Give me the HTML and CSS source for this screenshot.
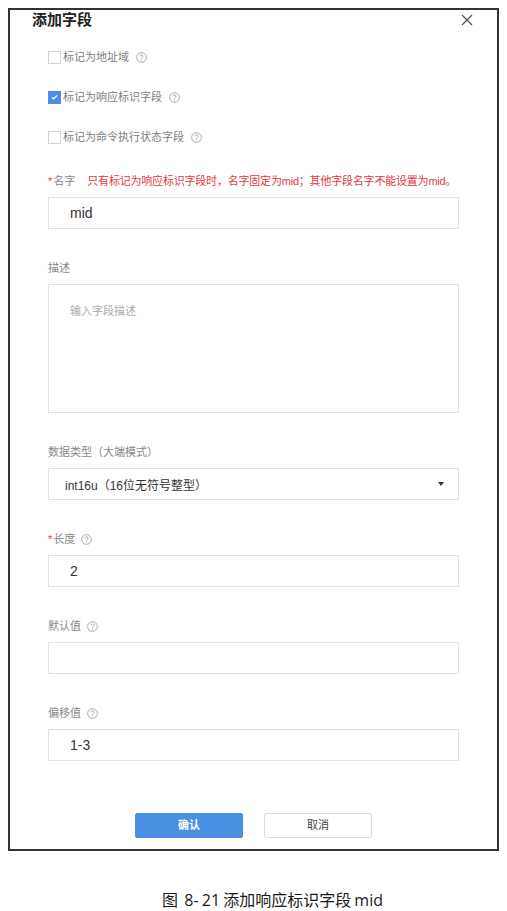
FILE: index.html
```html
<!DOCTYPE html>
<html lang="zh-CN">
<head>
<meta charset="utf-8">
<title>添加字段</title>
<link rel="stylesheet" href="styles.css">
</head>
<body>
<div class="dialog">
  <div class="dlg-head">
    <span class="dlg-title">添加字段</span>
    <svg class="close" width="12" height="12" viewBox="0 0 12 12"><path d="M1 1L11 11M11 1L1 11" stroke="#555" stroke-width="1.3" fill="none"/></svg>
  </div>

  <div class="checks">
    <div class="check-row">
      <span class="box"></span><span class="check-text">标记为地址域</span>
      <svg class="help" width="11" height="11" viewBox="0 0 12 12"><circle cx="6" cy="6" r="5.3" fill="none" stroke="#999" stroke-width="0.9"/><path d="M4.4 4.7a1.6 1.6 0 1 1 2.3 1.4c-.5.3-.7.6-.7 1.1v.3" fill="none" stroke="#999" stroke-width="0.9"/><circle cx="6" cy="8.9" r="0.55" fill="#999"/></svg>
    </div>
    <div class="check-row">
      <span class="box checked"><svg width="12" height="12" viewBox="0 0 12 12"><path d="M3.2 6.2L5.2 8L8.8 4.2" fill="none" stroke="#fff" stroke-width="1.3"/></svg></span><span class="check-text">标记为响应标识字段</span>
      <svg class="help" width="11" height="11" viewBox="0 0 12 12"><circle cx="6" cy="6" r="5.3" fill="none" stroke="#999" stroke-width="0.9"/><path d="M4.4 4.7a1.6 1.6 0 1 1 2.3 1.4c-.5.3-.7.6-.7 1.1v.3" fill="none" stroke="#999" stroke-width="0.9"/><circle cx="6" cy="8.9" r="0.55" fill="#999"/></svg>
    </div>
    <div class="check-row">
      <span class="box"></span><span class="check-text">标记为命令执行状态字段</span>
      <svg class="help" width="11" height="11" viewBox="0 0 12 12"><circle cx="6" cy="6" r="5.3" fill="none" stroke="#999" stroke-width="0.9"/><path d="M4.4 4.7a1.6 1.6 0 1 1 2.3 1.4c-.5.3-.7.6-.7 1.1v.3" fill="none" stroke="#999" stroke-width="0.9"/><circle cx="6" cy="8.9" r="0.55" fill="#999"/></svg>
    </div>
  </div>

  <div class="form">
    <div class="field">
      <div class="label"><span class="req">*</span>名字<span class="err">只有标记为响应标识字段时，名字固定为mid；其他字段名字不能设置为mid。</span></div>
      <div class="input">mid</div>
    </div>
    <div class="field">
      <div class="label">描述</div>
      <div class="textarea">输入字段描述</div>
    </div>
    <div class="field">
      <div class="label">数据类型（大端模式）</div>
      <div class="select"><span>int16u（16位无符号整型）</span><span class="arrow"></span></div>
    </div>
    <div class="field">
      <div class="label"><span class="req">*</span>长度
        <svg class="help" width="11" height="11" viewBox="0 0 12 12"><circle cx="6" cy="6" r="5.3" fill="none" stroke="#999" stroke-width="0.9"/><path d="M4.4 4.7a1.6 1.6 0 1 1 2.3 1.4c-.5.3-.7.6-.7 1.1v.3" fill="none" stroke="#999" stroke-width="0.9"/><circle cx="6" cy="8.9" r="0.55" fill="#999"/></svg>
      </div>
      <div class="input">2</div>
    </div>
    <div class="field">
      <div class="label">默认值
        <svg class="help" width="11" height="11" viewBox="0 0 12 12"><circle cx="6" cy="6" r="5.3" fill="none" stroke="#999" stroke-width="0.9"/><path d="M4.4 4.7a1.6 1.6 0 1 1 2.3 1.4c-.5.3-.7.6-.7 1.1v.3" fill="none" stroke="#999" stroke-width="0.9"/><circle cx="6" cy="8.9" r="0.55" fill="#999"/></svg>
      </div>
      <div class="input"></div>
    </div>
    <div class="field">
      <div class="label">偏移值
        <svg class="help" width="11" height="11" viewBox="0 0 12 12"><circle cx="6" cy="6" r="5.3" fill="none" stroke="#999" stroke-width="0.9"/><path d="M4.4 4.7a1.6 1.6 0 1 1 2.3 1.4c-.5.3-.7.6-.7 1.1v.3" fill="none" stroke="#999" stroke-width="0.9"/><circle cx="6" cy="8.9" r="0.55" fill="#999"/></svg>
      </div>
      <div class="input">1-3</div>
    </div>
  </div>

  <div class="footer">
    <div class="btn primary">确认</div>
    <div class="btn">取消</div>
  </div>
</div>
<div class="caption">图&nbsp; 8-&nbsp;21 添加响应标识字段 mid</div>
</body>
</html>
```

FILE: styles.css
```css
body {
  margin: 8px;
  background: #fff;
  font-family: "Liberation Sans", "Noto Sans CJK SC", sans-serif;
  color: #333;
}
.dialog {
  box-sizing: border-box;
  height: 843px;
  border: 2px solid #333;
  display: flex;
  flex-direction: column;
}
.dlg-head {
  height: 20px;
  padding: 0 24px 0 22px;
  display: flex;
  align-items: center;
  justify-content: space-between;
}
.dlg-title {
  font-size: 15px;
  font-weight: bold;
  color: #222;
  line-height: 20px;
}
.close { display: block; }
.checks {
  margin-top: 19px;
  padding-left: 38px;
  display: flex;
  flex-direction: column;
  gap: 24px;
}
.check-row {
  height: 16px;
  display: flex;
  align-items: center;
  font-size: 11px;
  color: #808080;
}
.box {
  box-sizing: border-box;
  width: 13px;
  height: 13px;
  border: 1px solid #d4d4d4;
  background: #fff;
  margin-right: 2px;
  display: flex;
  align-items: center;
  justify-content: center;
}
.box.checked {
  background: #4a8fe3;
  border-color: #4a8fe3;
}
.box svg { display: block; }
.check-text { line-height: 16px; }
.help {
  display: inline-block;
  margin-left: 7px;
  vertical-align: middle;
}
.form {
  margin-top: 28px;
  padding: 0 38px;
  display: flex;
  flex-direction: column;
  gap: 31px;
}
.label {
  height: 16px;
  line-height: 16px;
  font-size: 11px;
  color: #888;
  margin-bottom: 8px;
  display: flex;
  align-items: center;
  white-space: nowrap;
}
.label .help { margin-left: 6px; }
.req { color: #e33; margin-right: 1px; }
.err {
  color: #e23a3a;
  margin-left: 12px;
  letter-spacing: -0.2px;
  white-space: nowrap;
}
.input, .select, .textarea {
  box-sizing: border-box;
  border: 1px solid #e2e2e2;
  background: #fff;
}
.input {
  height: 32px;
  line-height: 30px;
  padding-left: 21px;
  font-size: 14px;
  color: #333;
}
.textarea {
  height: 129px;
  padding: 18px 0 0 21px;
  font-size: 11px;
  line-height: 16px;
  color: #aaa;
}
.select {
  height: 32px;
  padding: 0 14px 0 16px;
  display: flex;
  align-items: center;
  justify-content: space-between;
  font-size: 12px;
  color: #333;
}
.arrow {
  width: 0;
  height: 0;
  border-left: 3px solid transparent;
  border-right: 3px solid transparent;
  border-top: 4px solid #333;
}
.footer {
  margin-top: auto;
  padding-bottom: 11px;
  display: flex;
  justify-content: center;
  gap: 21px;
}
.btn {
  box-sizing: border-box;
  width: 108px;
  height: 25px;
  line-height: 23px;
  text-align: center;
  font-size: 11px;
  color: #444;
  border: 1px solid #dcdcdc;
  border-radius: 2px;
  background: #fff;
}
.btn.primary {
  background: #4a90e2;
  border-color: #4a90e2;
  color: #fff;
  font-weight: bold;
}
.caption {
  margin-top: 39px;
  text-align: center;
  font-family: "Open Sans", "Noto Sans CJK SC", sans-serif;
  font-size: 16px;
  line-height: 20px;
  color: #1a1a1a;
  padding-left: 38px;
  word-spacing: -1px;
}
```
